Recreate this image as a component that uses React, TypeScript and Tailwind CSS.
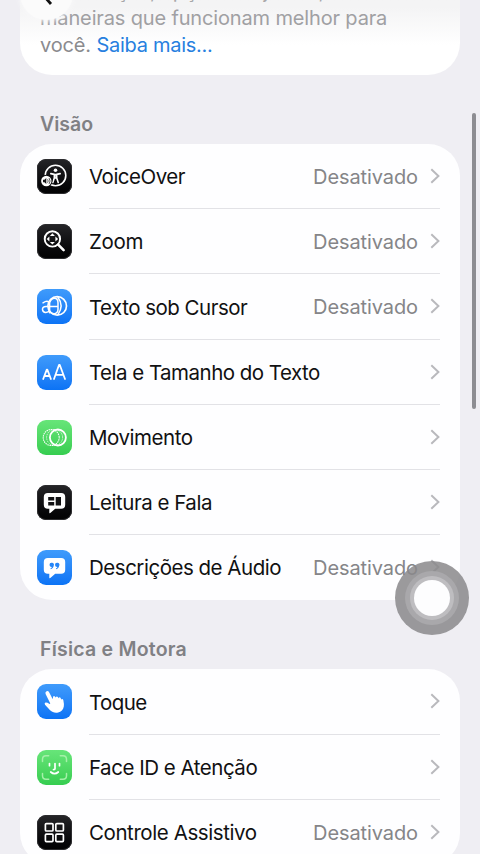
import React from "react";

type IconName = "voice" | "zoom" | "cursor" | "text" | "motion" | "read" | "audio" | "touch" | "face" | "switch";

interface Item {
  label: string;
  icon: IconName;
  tone: string;
  tracking: string;
  off?: boolean;
}

const BLACK = "bg-linear-to-b from-[#252528] to-[#020203] ring-1 ring-inset ring-[#2c2c2f]";
const BLUE = "bg-linear-to-b from-[#3f9bfb] to-[#0b73f5]";
const GREEN = "bg-linear-to-b from-[#67e579] to-[#35cd50]";

const vision: Item[] = [
  { label: "VoiceOver", icon: "voice", tone: BLACK, tracking: "tracking-[-0.5px]", off: true },
  { label: "Zoom", icon: "zoom", tone: BLACK, tracking: "tracking-[-0.3px]", off: true },
  { label: "Texto sob Cursor", icon: "cursor", tone: BLUE, tracking: "tracking-[-0.51px]", off: true },
  { label: "Tela e Tamanho do Texto", icon: "text", tone: BLUE, tracking: "tracking-[-0.52px]" },
  { label: "Movimento", icon: "motion", tone: GREEN, tracking: "tracking-[-0.46px]" },
  { label: "Leitura e Fala", icon: "read", tone: BLACK, tracking: "tracking-[-0.48px]" },
  { label: "Descrições de Áudio", icon: "audio", tone: BLUE, tracking: "tracking-[-0.48px]", off: true },
];

const motor: Item[] = [
  { label: "Toque", icon: "touch", tone: BLUE, tracking: "tracking-[-0.6px]" },
  { label: "Face ID e Atenção", icon: "face", tone: GREEN, tracking: "tracking-[-0.48px]" },
  { label: "Controle Assistivo", icon: "switch", tone: BLACK, tracking: "tracking-[-0.42px]", off: true },
];

function Glyph({ name }: { name: IconName }) {
  const stroke = { fill: "none", stroke: "white", strokeWidth: 1.5, strokeLinecap: "round" as const, strokeLinejoin: "round" as const };
  return (
    <svg viewBox="0 0 35 35" className="size-[35px]">
      {name === "voice" && (
        <g {...stroke}>
          <circle cx="18.5" cy="16.5" r="10.3" strokeWidth="1.6" />
          <circle cx="18.5" cy="11.2" r="1.8" fill="white" stroke="none" />
          <path d="M13.8 14.6l3.5.8v3.6l-1.5 4.4M23.2 14.6l-3.5.8v3.6l1.5 4.4M17.6 15.6h1.8v3.4h-1.8z" strokeWidth="1.6" />
          <circle cx="9.3" cy="22" r="6.2" fill="#0c0c0e" stroke="none" />
          <circle cx="9.3" cy="22" r="5.2" fill="white" stroke="none" />
          <path d="M6 20.8h1.4l1.9-1.7v5.8l-1.9-1.7H6z" fill="#18181a" stroke="none" />
          <path d="M10.8 20.6q1 1.4 0 2.8M12.3 19.4q1.8 2.6 0 5.2" stroke="#18181a" strokeWidth=".7" />
        </g>
      )}
      {name === "zoom" && (
        <g {...stroke}>
          <circle cx="15.4" cy="14.9" r="7.7" strokeWidth="1.9" />
          <path d="M21.2 20.7l5.4 5.4" strokeWidth="2.6" />
          <path fill="white" stroke="none" d="M15.4 9.2l2.5 2.7h-5zM15.4 20.6l2.5-2.7h-5zM9.7 14.9l2.7-2.5v5zM21.1 14.9l-2.7-2.5v5z" />
        </g>
      )}
      {name === "cursor" && (
        <g {...stroke}>
          <circle cx="20.2" cy="16.9" r="9.3" strokeWidth="1.7" />
          <path d="M6 13.8q4.6-3 6.6 0v10M12.6 17.4H9q-3.8.3-3.5 3.2c.5 3.6 5.2 3.6 7.1.8M12.6 17.6H21M12.6 13.8c2-6 8.4-6.3 8.4.3v6.2c0 5.3-6.4 5.8-8.4 1.5M21 8.5q6.2 8 0 17" strokeWidth="1.5" />
        </g>
      )}
      {name === "text" && (
        <g {...stroke} strokeWidth="1.8">
          <path d="M6.2 24l3.6-9.4h.5l3.6 9.4M7.4 21h5.3M17 24l5-14h.8L28 24M18.7 19.8h7.5" />
        </g>
      )}
      {name === "motion" && (
        <g {...stroke}>
          <circle cx="20.9" cy="17.5" r="8" strokeWidth="1.8" />
          <circle cx="17.6" cy="17.5" r="8" strokeWidth=".8" strokeDasharray=".5 1.8" />
          <circle cx="14.2" cy="17.5" r="8" strokeWidth="1.1" strokeDasharray=".6 1.6" />
        </g>
      )}
      {name === "read" && (
        <g>
          <path fill="white" d="M10.8 8h13.4q4 0 4 4v7.8q0 4-4 4h-6l-4.9 4.3q-1 .7-1-.5v-3.8h-1.5q-4 0-4-4V12q0-4 4-4z" />
          <path fill="#111113" d="M11.2 12h6v3.5h-6zM11.2 17h6v3.5h-6zM18.7 12h5.3v8.5h-5.3z" />
        </g>
      )}
      {name === "audio" && (
        <g>
          <path fill="white" d="M10.8 8h13.4q4 0 4 4v7.8q0 4-4 4h-6l-4.9 4.3q-1 .7-1-.5v-3.8h-1.5q-4 0-4-4V12q0-4 4-4z" />
          <path fill="#2485f8" d="M12.5 15a2.2 2.2 0 1 1 4.3.6c-.4 2.2-1.7 3.3-3 3.7l-.4-.7q1.3-.7 1.6-1.6-2.3.2-2.5-2zM18 15a2.2 2.2 0 1 1 4.3.6c-.4 2.2-1.7 3.3-3 3.7l-.4-.7q1.3-.7 1.6-1.6-2.3.2-2.5-2z" />
        </g>
      )}
      {name === "touch" && (
        <path fill="white" d="M9.2 7.4q1.8-1.2 2.9.8l3.4 6.6.5-.2V13q.8-1.8 2.3 0l.5.8v-.7q1.2-1.5 2.4.4l.4 1v-.6q1.3-1.3 2.3.5l.4 1q1.3-1 2 .5.9 3.7.5 6.7c-.5 3.2-2.7 5.2-5.7 5.9-3.3.7-5.8-.3-8-2.3L8 20.8q-1-1.6.6-2.2 1.4-.2 4 1.4l.7-.4L8.6 10q-.6-1.7.6-2.6z" />
      )}
      {name === "face" && (
        <g {...stroke}>
          <path stroke="#a5f0a9" d="M5.5 11.5V9.2q0-3.5 3.5-3.5h2.7M23.3 5.7H26q3.5 0 3.5 3.5v2.3M29.5 23.4v2.4q0 3.5-3.5 3.5h-2.7M11.7 29.3H9q-3.5 0-3.5-3.5v-2.4" />
          <path d="M12.5 13.5v2.2M22.5 13.5v2.2M18 13.5v5q0 1.2-1.5 1M13.7 22q3.8 3.4 7.6 0" strokeWidth="1.7" />
        </g>
      )}
      {name === "switch" && (
        <g {...stroke} strokeWidth="1.7">
          <rect x="8.4" y="8.6" width="7.6" height="7.4" rx="1" />
          <rect x="18.8" y="8.6" width="7.6" height="7.4" rx="1" />
          <rect x="8.4" y="19.2" width="7.6" height="7.4" rx="1" />
          <rect x="18.8" y="19.2" width="7.6" height="7.4" rx="1" />
        </g>
      )}
    </svg>
  );
}

function Row({ item, last }: { item: Item; last: boolean }) {
  return (
    <div className="flex h-[65.2px] pl-[17px] pr-5">
      <div className="flex w-[52px] shrink-0 items-center">
        <div className={`size-[35px] overflow-hidden rounded-[9px] ${item.tone}`}>
          <Glyph name={item.icon} />
        </div>
      </div>
      <div className={`flex flex-1 items-center border-b ${last ? "border-transparent" : "border-[#e2e2e6]"}`}>
        <span className={`whitespace-nowrap pt-[3px] text-[20.5px] text-[#111112] ${item.tracking}`}>{item.label}</span>
        <span className="ml-auto pt-[2px] text-[20px] tracking-[-0.1px] text-[#858588]">{item.off ? "Desativado" : ""}</span>
        <svg viewBox="0 0 10 16" className="ml-3 h-4 w-[10px]">
          <path d="M1.3 1.3L8.4 8l-7.1 6.7" fill="none" stroke="#b9b9bd" strokeWidth="2" />
        </svg>
      </div>
    </div>
  );
}

function Card({ items }: { items: Item[] }) {
  return (
    <div className="mx-5 shrink-0 rounded-[32px] bg-[#fefeff]">
      {items.map((item, i) => (
        <Row key={item.label} item={item} last={i === items.length - 1} />
      ))}
    </div>
  );
}

export default function App() {
  return (
    <main className="relative flex h-[854px] w-[480px] flex-col overflow-hidden bg-[#efeef3] font-['Inter',sans-serif]">
      <section className="mx-5 flex h-[75px] shrink-0 flex-col justify-end overflow-hidden rounded-b-[32px] bg-linear-to-b from-[#f4f4f5] from-10% to-white to-60% px-5 pb-4">
        <p className="whitespace-nowrap text-[20px] leading-[27px] tracking-[-0.15px] text-[#8b8b8e]">
          <span className="block text-[#a7a7a9]">Os serviços, opções e ajustes, das</span>
          <span className="block text-[#a0a0a3]">maneiras que funcionam melhor para</span>
          <span>você. </span>
          <span className="tracking-[-0.28px] text-[#2780df]">Saiba mais...</span>
        </p>
      </section>
      <h2 className="flex h-[69px] shrink-0 items-end px-10 pb-[6px] text-[19.5px] font-semibold leading-7 text-[#808084]">Visão</h2>
      <Card items={vision} />
      <h2 className="flex h-[69px] shrink-0 items-end px-10 pb-[6px] text-[19.5px] font-semibold leading-7 tracking-[0.22px] text-[#808084]">
        Física e Motora
      </h2>
      <Card items={motor} />
      <div className="absolute left-[20px] top-[-33px] flex size-[53px] items-end justify-center rounded-full bg-[#fbfbfb] shadow-[0_0_5px_1px_#f8f8f9]">
        <svg viewBox="0 0 12 20" className="mb-[15px] h-5 w-3">
          <path d="M10 1L2 10l8 9" fill="none" stroke="#111" strokeWidth="2.8" />
        </svg>
      </div>
      <div className="absolute left-[472px] top-[113px] h-[296px] w-1 rounded-full bg-[#8d8d92]" />
      <div className="absolute left-[395px] top-[561px] flex size-[74px] items-center justify-center rounded-full bg-[#8a888b]/85">
        <div className="flex size-[54px] items-center justify-center rounded-full bg-[#a9a8ab]">
          <div className="flex size-[44px] items-center justify-center rounded-full bg-[#bebdc0]">
            <div className="size-[36px] rounded-full bg-[#fdfdfe]" />
          </div>
        </div>
      </div>
    </main>
  );
}
